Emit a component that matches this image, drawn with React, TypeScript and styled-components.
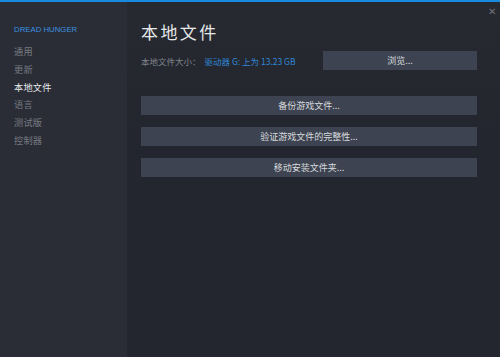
import React from 'react';
import styled, { createGlobalStyle } from 'styled-components';

const GlobalStyle = createGlobalStyle`
  html, body {
    margin: 0;
    padding: 0;
    background: #23262e;
  }
  body {
    font-family: "Noto Sans CJK SC", "Noto Sans", Arial, sans-serif;
  }
`;

const menu = ['通用', '更新', '本地文件', '语言', '测试版', '控制器'];
const actions = ['备份游戏文件...', '验证游戏文件的完整性...', '移动安装文件夹...'];

const App: React.FC = () => {
  return (
    <>
      <GlobalStyle />
      <Window>
        <Sidebar>
          <GameTitle>DREAD HUNGER</GameTitle>
          <Menu>
            {menu.map((item) => (
              <MenuItem key={item} active={item === '本地文件'}>
                {item}
              </MenuItem>
            ))}
          </Menu>
        </Sidebar>
        <Content>
          <Close>✕</Close>
          <Title>本地文件</Title>
          <SizeRow>
            <SizeInfo>
              <SizeLabel>本地文件大小：</SizeLabel>
              <SizeValue>驱动器 G: 上为 13.23 GB</SizeValue>
            </SizeInfo>
            <BrowseButton>浏览...</BrowseButton>
          </SizeRow>
          <Actions>
            {actions.map((a) => (
              <ActionButton key={a}>{a}</ActionButton>
            ))}
          </Actions>
        </Content>
      </Window>
    </>
  );
};

const Window = styled.div`
  display: flex;
  width: 500px;
  height: 357px;
  box-sizing: border-box;
  border-top: 2px solid #1a8ae0;
  background: #23262e;
  overflow: hidden;
`;

const Sidebar = styled.nav`
  width: 127px;
  flex-shrink: 0;
  background: #2a2d35;
  padding: 21px 0 0 14px;
  box-sizing: border-box;
`;

const GameTitle = styled.div`
  font-family: "Liberation Sans", Arial, sans-serif;
  font-size: 7.8px;
  color: #3a91e2;
  height: 14px;
  line-height: 14px;
  margin-bottom: 6px;
`;

const Menu = styled.ul`
  list-style: none;
  margin: 0;
  padding: 0;
  display: flex;
  flex-direction: column;
`;

const MenuItem = styled.li<{ active?: boolean }>`
  font-size: 9.2px;
  letter-spacing: 0.2px;
  height: 17.8px;
  line-height: 17.8px;
  color: ${(p) => (p.active ? '#e8eaec' : '#767a82')};
`;

const Content = styled.main`
  flex: 1;
  position: relative;
  padding: 18px 23px 0 14px;
  background: linear-gradient(180deg, #262930 0%, #23262e 40%);
`;

const Close = styled.span`
  position: absolute;
  top: 1px;
  right: 4px;
  font-size: 10px;
  color: #6f737a;
`;

const Title = styled.h1`
  margin: 0;
  font-size: 17px;
  font-weight: 400;
  letter-spacing: 2.4px;
  color: #e6e8ea;
  height: 24px;
  line-height: 24px;
`;

const SizeRow = styled.div`
  display: flex;
  align-items: center;
  justify-content: space-between;
  margin-top: 7px;
`;

const SizeInfo = styled.div`
  font-size: 8.5px;
  display: flex;
  gap: 4px;
`;

const SizeLabel = styled.span`
  color: #7f838a;
`;

const SizeValue = styled.span`
  color: #2f86d6;
`;

const Button = styled.div`
  height: 19px;
  line-height: 19px;
  background: #3d4350;
  color: #d8dbdf;
  font-size: 9px;
  text-align: center;
  box-sizing: border-box;
`;

const BrowseButton = styled(Button)`
  width: 154px;
`;

const Actions = styled.div`
  display: flex;
  flex-direction: column;
  gap: 12px;
  margin-top: 26px;
`;

const ActionButton = styled(Button)`
  width: 100%;
`;

export default App;
